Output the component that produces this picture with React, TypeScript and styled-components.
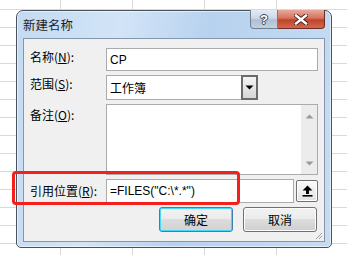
import styled, { createGlobalStyle } from "styled-components";

const GlobalStyle = createGlobalStyle`
  html, body {
    margin: 0;
    padding: 0;
  }
  body {
    font-family: "Liberation Sans", "Noto Sans CJK SC", sans-serif;
    font-size: 12px;
    color: #000;
  }
`;

const Sheet = styled.div`
  position: relative;
  width: 347px;
  height: 255px;
  overflow: hidden;
  box-sizing: border-box;
  padding: 10px 0 0 16px;
  background-color: #fff;
  background-image:
    linear-gradient(to right, #d9d9d9 1px, transparent 1px),
    linear-gradient(to bottom, #d9d9d9 1px, transparent 1px);
  background-size: 72px 18px;
  background-position: 60px 9px;
`;

const Window = styled.div`
  width: 316px;
  height: 238px;
  box-sizing: border-box;
  border: 1px solid #4b5159;
  border-radius: 7px 7px 5px 5px;
  padding: 0 6px 5px 6px;
  display: flex;
  flex-direction: column;
  background: linear-gradient(100deg, #c3daf2 0%, #d2e4f7 30%, #b7d2ef 55%, #c6dcf3 100%);
  box-shadow: inset 0 0 0 1px rgba(255, 255, 255, 0.55);
`;

const TitleBar = styled.div`
  height: 27px;
  flex: none;
  display: flex;
  align-items: flex-start;
  justify-content: space-between;
`;

const Title = styled.div`
  font-family: "Noto Sans CJK SC", sans-serif;
  font-size: 12.5px;
  line-height: 16px;
  padding-top: 6px;
  color: #1e1e1e;
`;

const Controls = styled.div`
  display: flex;
  margin-top: -1px;
`;

type CtrlProps = { $kind: "help" | "close" };
const CtrlButton = styled.div<CtrlProps>`
  height: 19px;
  width: ${(p) => (p.$kind === "help" ? "28px" : "47px")};
  box-sizing: border-box;
  display: flex;
  align-items: center;
  justify-content: center;
  border: 1px solid ${(p) => (p.$kind === "help" ? "#6f7f92" : "#6e2a20")};
  border-top: none;
  border-left: ${(p) => (p.$kind === "help" ? "1px solid #6f7f92" : "none")};
  border-radius: ${(p) => (p.$kind === "help" ? "0 0 0 4px" : "0 0 4px 0")};
  background: ${(p) =>
    p.$kind === "help"
      ? "linear-gradient(to bottom, #e3ebf4 0%, #cdd9e6 45%, #afc0d2 55%, #c2d1e0 100%)"
      : "linear-gradient(to bottom, #e9a99b 0%, #d5735f 45%, #c0412a 55%, #d26a50 100%)"};
`;

const HelpGlyph = styled.span`
  font-family: "Liberation Sans", sans-serif;
  font-weight: bold;
  font-size: 13px;
  line-height: 13px;
  color: #fff;
  text-shadow: -1px 0 #3c4450, 1px 0 #3c4450, 0 -1px #3c4450, 0 1px #3c4450;
`;

const Client = styled.div`
  flex: 1;
  position: relative;
  box-sizing: border-box;
  border: 1px solid #8596ab;
  background: #f0f0f0;
  padding: 9px 6px 0 6px;
  display: flex;
  flex-direction: column;
  gap: 4px;
`;

type RowProps = { $align?: string };
const Row = styled.div<RowProps>`
  display: flex;
  align-items: ${(p) => p.$align || "flex-start"};
`;

type LabelProps = { $pad?: number };
const Label = styled.div<LabelProps>`
  width: 76px;
  flex: none;
  font-family: "Noto Sans CJK SC", sans-serif;
  font-size: 12px;
  line-height: 16px;
  padding-top: ${(p) => p.$pad ?? 0}px;
  color: #000;
  u {
    text-decoration: underline;
    text-underline-offset: 1px;
  }
`;

type FieldProps = { $h: number; $w?: number };
const Field = styled.div<FieldProps>`
  height: ${(p) => p.$h}px;
  width: ${(p) => (p.$w ? `${p.$w}px` : "auto")};
  flex: ${(p) => (p.$w ? "none" : "1")};
  box-sizing: border-box;
  border: 1px solid #ababab;
  background: #fff;
  display: flex;
  align-items: center;
  padding-left: 3px;
  font-size: 12px;
  position: relative;
`;

const Combo = styled(Field)`
  padding-right: 0;
  justify-content: space-between;
  align-items: stretch;
`;

const ComboText = styled.span`
  display: flex;
  align-items: center;
  font-family: "Noto Sans CJK SC", sans-serif;
`;

const DropButton = styled.div`
  width: 17px;
  margin: -1px -1px -1px 0;
  box-sizing: border-box;
  border: 2px solid #6b6b6b;
  background: linear-gradient(to bottom, #f4f4f4, #d6d6d6);
  display: flex;
  align-items: center;
  justify-content: center;
`;

const Memo = styled(Field)`
  align-items: stretch;
  justify-content: flex-end;
  padding: 0;
`;

const ScrollTrack = styled.div`
  width: 16px;
  margin: 0 0 0 0;
  background: #ececec;
  display: flex;
  flex-direction: column;
  justify-content: space-between;
  align-items: center;
  padding: 9px 0 8px;
  box-sizing: border-box;
`;

const CollapseButton = styled.div`
  width: 22px;
  height: 22px;
  margin-left: 2px;
  box-sizing: border-box;
  border: 1px solid #707070;
  border-radius: 2px;
  background: linear-gradient(to bottom, #fbfbfb, #e2e2e2);
  box-shadow: inset 0 0 0 1px #fff;
  display: flex;
  align-items: center;
  justify-content: center;
`;

const ButtonBar = styled.div`
  display: flex;
  justify-content: flex-end;
  gap: 10px;
  padding-right: 1px;
`;

type BtnProps = { $primary?: boolean };
const Button = styled.div<BtnProps>`
  width: 74px;
  height: 25px;
  box-sizing: border-box;
  border: 1px solid ${(p) => (p.$primary ? "#3c7fb1" : "#707070")};
  border-radius: 3px;
  background: ${(p) =>
    p.$primary
      ? "linear-gradient(to bottom, #f2f2f2 0%, #ebebeb 50%, #dcdcdc 50%, #d2d2d2 100%)"
      : "linear-gradient(to bottom, #f2f2f2 0%, #ebebeb 50%, #dddddd 50%, #cfcfcf 100%)"};
  box-shadow: ${(p) => (p.$primary ? "inset 0 0 0 1px #48d8fb" : "inset 0 0 0 1px #fcfcfc")};
  display: flex;
  align-items: center;
  justify-content: center;
  font-family: "Noto Sans CJK SC", sans-serif;
  font-size: 12px;
`;

const Grip = styled.svg`
  position: absolute;
  right: 1px;
  bottom: 1px;
`;

const Highlight = styled.div`
  position: absolute;
  left: 12px;
  top: 171px;
  width: 228px;
  height: 34px;
  box-sizing: border-box;
  border: 3px solid #f5201c;
  border-radius: 4px;
  pointer-events: none;
`;

const Tri = ({ up, color }: { up?: boolean; color: string }) => (
  <svg width="9" height="5" viewBox="0 0 9 5">
    <path d={up ? "M0.5 4.5 L4.5 0.5 L8.5 4.5 Z" : "M0.5 0.5 L8.5 0.5 L4.5 4.5 Z"} fill={color} />
  </svg>
);

export default function App() {
  return (
    <>
      <GlobalStyle />
      <Sheet>
        <Window>
          <TitleBar>
            <Title>新建名称</Title>
            <Controls>
              <CtrlButton $kind="help">
                <HelpGlyph>?</HelpGlyph>
              </CtrlButton>
              <CtrlButton $kind="close">
                <svg width="14" height="11" viewBox="0 0 14 11">
                  <path d="M2 1.5 L12 9.5 M12 1.5 L2 9.5" stroke="#4a1d16" strokeWidth="4.2" strokeLinecap="square" />
                  <path d="M2 1.5 L12 9.5 M12 1.5 L2 9.5" stroke="#fff" strokeWidth="2.4" strokeLinecap="square" />
                </svg>
              </CtrlButton>
            </Controls>
          </TitleBar>
          <Client>
            <Row>
              <Label $pad={1}>
                名称(<u>N</u>):
              </Label>
              <Field $h={23}>CP</Field>
            </Row>
            <Row>
              <Label $pad={1}>
                范围(<u>S</u>):
              </Label>
              <Combo $h={25} $w={152}>
                <ComboText>工作簿</ComboText>
                <DropButton>
                  <Tri color="#000" />
                </DropButton>
              </Combo>
            </Row>
            <Row>
              <Label $pad={3}>
                备注(<u>O</u>):
              </Label>
              <Memo $h={71}>
                <ScrollTrack>
                  <Tri up color="#9a9a9a" />
                  <Tri color="#9a9a9a" />
                </ScrollTrack>
              </Memo>
            </Row>
            <Row $align="center">
              <Label>
                引用位置(<u>R</u>):
              </Label>
              <Field $h={24}>=FILES("C:\*.*")</Field>
              <CollapseButton>
                <svg width="11" height="12" viewBox="0 0 11 12">
                  <path d="M5.5 0.5 L10.5 5.5 L7 5.5 L7 9 L4 9 L4 5.5 L0.5 5.5 Z" fill="#000" />
                  <rect x="0.5" y="10" width="10" height="1.6" fill="#000" />
                </svg>
              </CollapseButton>
            </Row>
            <ButtonBar>
              <Button $primary>确定</Button>
              <Button>取消</Button>
            </ButtonBar>
            <Grip width="9" height="9" viewBox="0 0 9 9">
              <path d="M8 2 L2 8 M8 5 L5 8" stroke="#9aa3ad" strokeWidth="1" />
            </Grip>
          </Client>
        </Window>
        <Highlight />
      </Sheet>
    </>
  );
}
